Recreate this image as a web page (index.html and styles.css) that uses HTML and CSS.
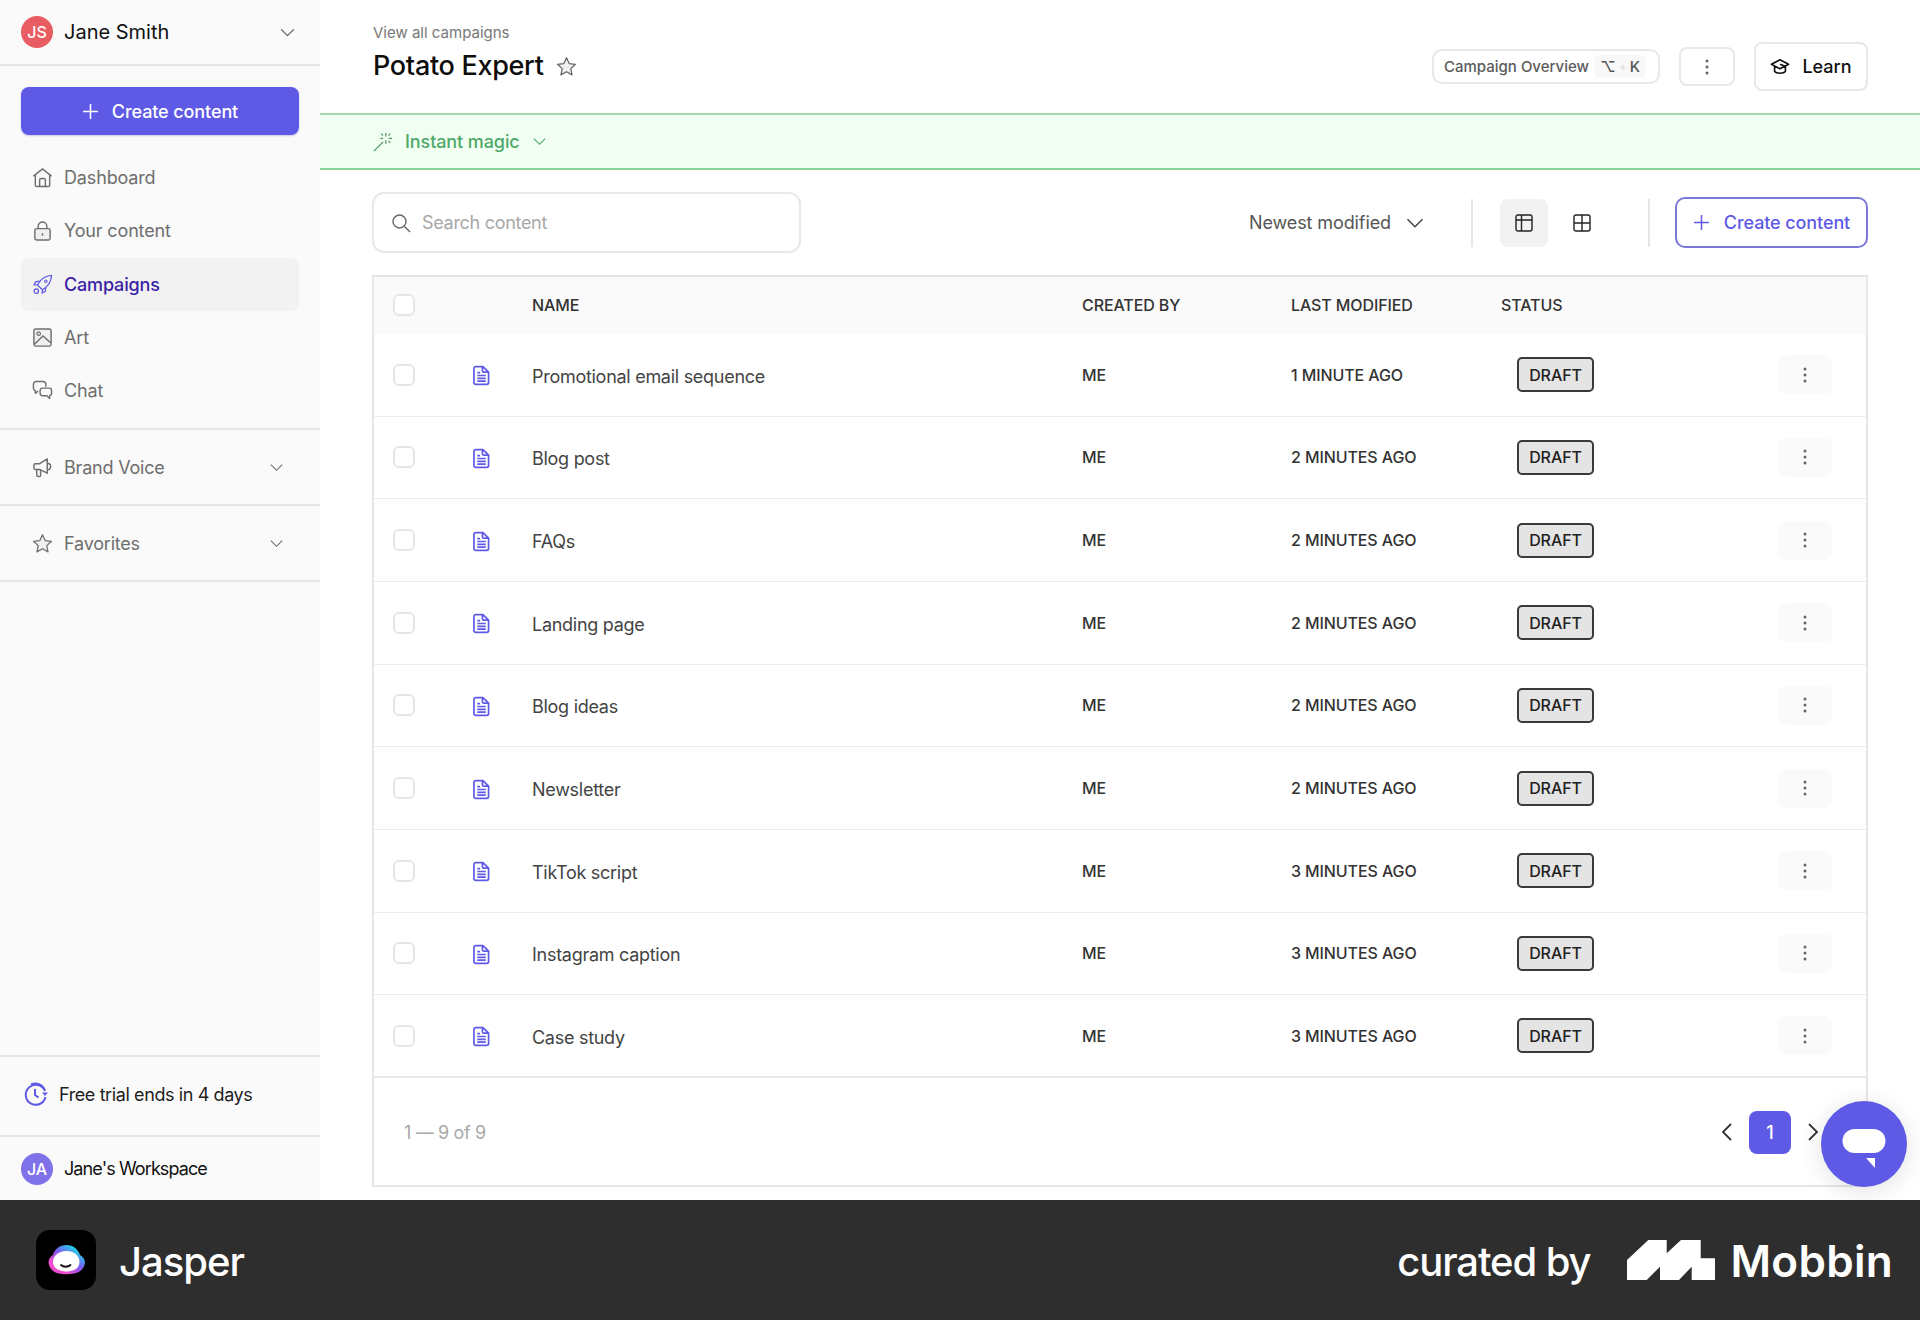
FILE: index.html
```html
<!DOCTYPE html>
<html lang="en">
<head>
<meta charset="utf-8">
<title>Potato Expert</title>
<link rel="stylesheet" href="styles.css">
</head>
<body>
<svg class="sprite" aria-hidden="true">
  <symbol id="chev" viewBox="0 0 16 16"><path d="M2 5l6 6 6-6" fill="none" stroke="currentColor" stroke-width="1.2"/></symbol>
  <symbol id="plus" viewBox="0 0 16 16"><path d="M8 1v14M1 8h14" fill="none" stroke="currentColor" stroke-width="1.4"/></symbol>
  <symbol id="home" viewBox="0 0 22 22"><path d="M1.5 9.5L11 2l9.5 7.5M3.5 8.5V19a1.500 1.500 0 0 0 1.500 1.500h12a1.500 1.500 0 0 0 1.500-1.500V8.500M8 20.500v-7a1.500 1.500 0 0 1 1.500-1.500h3a1.500 1.500 0 0 1 1.500 1.500v7" fill="none" stroke="currentColor" stroke-width="1.500"/></symbol>
  <symbol id="lock" viewBox="0 0 22 22"><rect x="3" y="9" width="16" height="12" rx="1.800" fill="#efefef" stroke="currentColor" stroke-width="1.500"/><path d="M6.500 9V6.500a4.500 4.500 0 0 1 9 0V9M11 14v2.500" fill="none" stroke="currentColor" stroke-width="1.500"/></symbol>
  <symbol id="rocket" viewBox="0 0 22 22"><path d="M20.500 1.500c-5 .5-9 2-12 6l-3 4 5.500 5 4-3c3.500-3 5-7 5.500-12zM8.500 7.500L4 8 2 11.500l3.500-.5M14.500 13.500l-.5 4.500-3.500 2 .5-3.500" fill="none" stroke="currentColor" stroke-width="1.300" stroke-linejoin="round"/><circle cx="4.500" cy="18" r="2.300" fill="none" stroke="currentColor" stroke-width="1.300"/><circle cx="14.500" cy="7.500" r="1.300" fill="none" stroke="currentColor" stroke-width="1.100"/></symbol>
  <symbol id="art" viewBox="0 0 22 22"><rect x="2" y="2" width="18" height="18" rx="1.800" fill="#f0f0f0" stroke="currentColor" stroke-width="1.500"/><circle cx="7" cy="7" r="1.800" fill="none" stroke="currentColor" stroke-width="1.300"/><path d="M2.500 18l9-8.500 8 7" fill="none" stroke="currentColor" stroke-width="1.500"/></symbol>
  <symbol id="chat" viewBox="0 0 22 22"><path d="M14.500 7V4.500a3 3 0 0 0-3-3h-7a3 3 0 0 0-3 3v4a3 3 0 0 0 2 2.800V14l3-2.500" fill="none" stroke="currentColor" stroke-width="1.500" stroke-linejoin="round"/><path d="M18 8.500h-7a2.500 2.500 0 0 0-2.500 2.500v3a2.500 2.500 0 0 0 2.500 2.500h4.500l3 3v-3.100a2.500 2.500 0 0 0 2-2.400v-3a2.500 2.500 0 0 0-2.500-2.500z" fill="#fafafa" stroke="currentColor" stroke-width="1.500" stroke-linejoin="round"/></symbol>
  <symbol id="mega" viewBox="0 0 22 22"><path d="M2 8.500c0-1 .7-1.500 1.500-1.500H8l8-5v15L8 13H3.500C2.700 13 2 12.500 2 11.500zM5 13v6a1.500 1.500 0 0 0 1.500 1.500H8a1 1 0 0 0 1-1V13M16 6.500a3.500 3.500 0 0 1 0 7" fill="none" stroke="currentColor" stroke-width="1.500" stroke-linejoin="round"/></symbol>
  <symbol id="star" viewBox="0 0 22 22"><path d="M11 1.800l2.800 6.100 6.600.8-4.900 4.500 1.300 6.600L11 16.500l-5.800 3.300 1.300-6.600L1.600 8.700l6.600-.8z" fill="#efefef" stroke="currentColor" stroke-width="1.300" stroke-linejoin="round"/></symbol>
  <symbol id="doc" viewBox="0 0 18 22"><path d="M3 1.500h7.500L16.500 7.500V18.500a2 2 0 0 1-2 2H3a2 2 0 0 1-2-2v-15a2 2 0 0 1 2-2zM10 1.500V6a1.500 1.500 0 0 0 1.500 1.500h5M4.500 11h9M4.500 14h9M4.500 17h9M4.500 8h3" fill="none" stroke="currentColor" stroke-width="1.800"/></symbol>
  <symbol id="dots" viewBox="0 0 4 16"><circle cx="2" cy="2" r="1.500" fill="currentColor"/><circle cx="2" cy="8" r="1.500" fill="currentColor"/><circle cx="2" cy="14" r="1.500" fill="currentColor"/></symbol>
</svg>

<div class="app">
  <div class="top">
    <aside class="sidebar">
      <div class="user">
        <span class="avatar avatar-red">JS</span>
        <span class="user-name">Jane Smith</span>
        <svg class="ic-chev user-chev"><use href="#chev"/></svg>
      </div>
      <div class="nav-block">
        <button class="btn-primary"><svg class="ic-plus"><use href="#plus"/></svg>Create content</button>
        <nav class="nav">
          <a class="nav-item"><svg class="ic"><use href="#home"/></svg>Dashboard</a>
          <a class="nav-item"><svg class="ic"><use href="#lock"/></svg>Your content</a>
          <a class="nav-item active"><svg class="ic"><use href="#rocket"/></svg>Campaigns</a>
          <a class="nav-item"><svg class="ic"><use href="#art"/></svg>Art</a>
          <a class="nav-item"><svg class="ic"><use href="#chat"/></svg>Chat</a>
        </nav>
      </div>
      <div class="section"><svg class="ic"><use href="#mega"/></svg>Brand Voice<svg class="ic-chev section-chev"><use href="#chev"/></svg></div>
      <div class="section"><svg class="ic"><use href="#star"/></svg>Favorites<svg class="ic-chev section-chev"><use href="#chev"/></svg></div>
      <div class="grow"></div>
      <div class="trial">
        <svg class="ic-trial" viewBox="0 0 26 24"><path d="M22 9A10 10 0 1 0 22.500 15M8 2.500A10 10 0 0 1 22 9" fill="none" stroke="currentColor" stroke-width="2"/><path d="M12 7v6l3.500 2.500" fill="none" stroke="currentColor" stroke-width="2"/><path d="M19 10.500h6l-3 3.500z" fill="currentColor"/></svg>
        Free trial ends in 4 days
      </div>
      <div class="workspace"><span class="avatar avatar-purple">JA</span><span class="ws-name">Jane's Workspace</span></div>
    </aside>

    <main class="main">
      <header class="page-head">
        <div class="titles">
          <div class="crumb">View all campaigns</div>
          <div class="title-row"><h1 class="title">Potato Expert</h1><svg class="ic-star"><use href="#star"/></svg></div>
        </div>
        <div class="head-actions">
          <div class="overview">Campaign Overview<span class="kbd"><span>⌥</span><span class="kbd-plus">+</span><span>K</span></span></div>
          <button class="btn-dots"><svg class="ic-dots"><use href="#dots"/></svg></button>
          <button class="btn-learn">
            <svg class="ic-cap" viewBox="0 0 22 20"><path d="M11 2L1.500 7 11 12l9.500-5zM5 9.500V15c2 2.500 10 2.500 12 0V9.500M11 7l5 2" fill="none" stroke="currentColor" stroke-width="1.800" stroke-linejoin="round"/></svg>
            Learn
          </button>
        </div>
      </header>

      <div class="magic">
        <svg class="ic-wand" viewBox="0 0 22 22"><path d="M1 21L11 11M14 1v4M14 9v4M21 7h-4M11 7H8M9 2l2 2M19 2l-2 2M19 12l-2-2" fill="none" stroke="currentColor" stroke-width="1.400"/></svg>
        <span>Instant magic</span>
        <svg class="ic-chev magic-chev"><use href="#chev"/></svg>
      </div>

      <div class="content">
        <div class="toolbar">
          <label class="search">
            <svg class="ic-search" viewBox="0 0 20 20"><circle cx="8.500" cy="8.500" r="6.500" fill="none" stroke="currentColor" stroke-width="1.400"/><path d="M13.500 13.500l5.500 5.500" stroke="currentColor" stroke-width="1.400"/></svg>
            <span>Search content</span>
          </label>
          <div class="sort">Newest modified<svg class="ic-sort"><use href="#chev"/></svg></div>
          <span class="vr vr-a"></span>
          <button class="view on"><svg class="ic-view" viewBox="0 0 18 18"><rect x="1" y="1" width="16" height="16" rx="2" fill="none" stroke="currentColor" stroke-width="1.400"/><path d="M1 6h16M6.500 1v16" stroke="currentColor" stroke-width="1.400"/></svg></button>
          <button class="view"><svg class="ic-view" viewBox="0 0 18 18"><rect x="1" y="1" width="16" height="16" rx="2" fill="none" stroke="currentColor" stroke-width="1.400"/><path d="M1 9h16M9 1v16" stroke="currentColor" stroke-width="1.400"/></svg></button>
          <span class="vr vr-b"></span>
          <button class="btn-outline"><svg class="ic-plus"><use href="#plus"/></svg>Create content</button>
        </div>

        <div class="table">
          <div class="row row-head">
            <span class="cell-chk"><span class="chk"></span></span><span></span>
            <span>NAME</span><span>CREATED BY</span><span>LAST MODIFIED</span><span>STATUS</span><span></span>
          </div>
          <div class="row"><span class="cell-chk"><span class="chk"></span></span><span class="cell-doc"><svg class="ic-doc"><use href="#doc"/></svg></span><span class="name">Promotional email sequence</span><span class="meta">ME</span><span class="meta">1 MINUTE AGO</span><span class="cell-status"><span class="draft">DRAFT</span></span><span class="act"><svg class="ic-dots"><use href="#dots"/></svg></span></div>
          <div class="row"><span class="cell-chk"><span class="chk"></span></span><span class="cell-doc"><svg class="ic-doc"><use href="#doc"/></svg></span><span class="name">Blog post</span><span class="meta">ME</span><span class="meta">2 MINUTES AGO</span><span class="cell-status"><span class="draft">DRAFT</span></span><span class="act"><svg class="ic-dots"><use href="#dots"/></svg></span></div>
          <div class="row"><span class="cell-chk"><span class="chk"></span></span><span class="cell-doc"><svg class="ic-doc"><use href="#doc"/></svg></span><span class="name">FAQs</span><span class="meta">ME</span><span class="meta">2 MINUTES AGO</span><span class="cell-status"><span class="draft">DRAFT</span></span><span class="act"><svg class="ic-dots"><use href="#dots"/></svg></span></div>
          <div class="row"><span class="cell-chk"><span class="chk"></span></span><span class="cell-doc"><svg class="ic-doc"><use href="#doc"/></svg></span><span class="name">Landing page</span><span class="meta">ME</span><span class="meta">2 MINUTES AGO</span><span class="cell-status"><span class="draft">DRAFT</span></span><span class="act"><svg class="ic-dots"><use href="#dots"/></svg></span></div>
          <div class="row"><span class="cell-chk"><span class="chk"></span></span><span class="cell-doc"><svg class="ic-doc"><use href="#doc"/></svg></span><span class="name">Blog ideas</span><span class="meta">ME</span><span class="meta">2 MINUTES AGO</span><span class="cell-status"><span class="draft">DRAFT</span></span><span class="act"><svg class="ic-dots"><use href="#dots"/></svg></span></div>
          <div class="row"><span class="cell-chk"><span class="chk"></span></span><span class="cell-doc"><svg class="ic-doc"><use href="#doc"/></svg></span><span class="name">Newsletter</span><span class="meta">ME</span><span class="meta">2 MINUTES AGO</span><span class="cell-status"><span class="draft">DRAFT</span></span><span class="act"><svg class="ic-dots"><use href="#dots"/></svg></span></div>
          <div class="row"><span class="cell-chk"><span class="chk"></span></span><span class="cell-doc"><svg class="ic-doc"><use href="#doc"/></svg></span><span class="name">TikTok script</span><span class="meta">ME</span><span class="meta">3 MINUTES AGO</span><span class="cell-status"><span class="draft">DRAFT</span></span><span class="act"><svg class="ic-dots"><use href="#dots"/></svg></span></div>
          <div class="row"><span class="cell-chk"><span class="chk"></span></span><span class="cell-doc"><svg class="ic-doc"><use href="#doc"/></svg></span><span class="name">Instagram caption</span><span class="meta">ME</span><span class="meta">3 MINUTES AGO</span><span class="cell-status"><span class="draft">DRAFT</span></span><span class="act"><svg class="ic-dots"><use href="#dots"/></svg></span></div>
          <div class="row row-last"><span class="cell-chk"><span class="chk"></span></span><span class="cell-doc"><svg class="ic-doc"><use href="#doc"/></svg></span><span class="name">Case study</span><span class="meta">ME</span><span class="meta">3 MINUTES AGO</span><span class="cell-status"><span class="draft">DRAFT</span></span><span class="act"><svg class="ic-dots"><use href="#dots"/></svg></span></div>
          <div class="table-foot">
            <span class="count">1 — 9 of 9</span>
            <div class="pager">
              <svg class="ic-page" viewBox="0 0 12 20"><path d="M10 2L2 10l8 8" fill="none" stroke="currentColor" stroke-width="1.800"/></svg>
              <span class="page-num">1</span>
              <svg class="ic-page" viewBox="0 0 12 20"><path d="M2 2l8 8-8 8" fill="none" stroke="currentColor" stroke-width="1.800"/></svg>
            </div>
          </div>
        </div>
      </div>
    </main>
  </div>

  <footer class="credit">
    <div class="credit-left">
      <span class="app-icon">
        <svg viewBox="0 0 60 60" width="60" height="60">
          <defs><linearGradient id="jg" x1="0.100" y1="0.900" x2="0.850" y2="0.050"><stop offset="0.200" stop-color="#f04bd0"/><stop offset="0.550" stop-color="#7a5cf2"/><stop offset="0.900" stop-color="#22d3e6"/></linearGradient></defs>
          <path d="M12.500 33C12.500 29 14.500 26.500 17 25 18.500 19 24 15 30.500 15 37 15 42 19 44 25 47 26.500 49 29.500 49 33 48 39 44 42.500 38 43.500 33 44.500 27 44.500 23 43.500 17 42.500 13.500 38.500 12.500 33Z" fill="url(#jg)"/>
          <path d="M17 32C17 25.500 23 21 30.500 21 38 21 43.500 25.500 43.500 32 43.500 38 38 41.500 30.500 41.500 23 41.500 17 38 17 32Z" fill="#fff"/>
          <path d="M25 35c2.500 2.300 7 2.300 9.500 0" fill="none" stroke="#111" stroke-width="1.800" stroke-linecap="round"/>
        </svg>
      </span>
      <span class="brand">Jasper</span>
    </div>
    <div class="credit-right">
      <span class="curated">curated by</span>
      <svg class="mobbin-logo" viewBox="0 0 88 40"><path d="M0 20L21.300 0H39.700V13.300L54 0H73.700V18.300H88V40H64.700V26.700L52 40H33V26.700L19.700 40H0Z" fill="#fff"/></svg>
      <span class="mobbin">Mobbin</span>
    </div>
  </footer>

  <div class="chat-bubble">
    <svg viewBox="0 0 44 40" width="44" height="40"><rect x="0.500" y="0" width="43" height="24" rx="12" fill="#fff"/><path d="M24 29h9v10z" fill="#fff"/></svg>
  </div>
</div>
</body>
</html>
```

FILE: styles.css
```css
* { box-sizing: border-box; }
html, body { margin: 0; padding: 0; }
body { font-family: Inter, "Liberation Sans", sans-serif; color: #111; background: #fff; }
button { font: inherit; background: none; border: 0; padding: 0; }
.sprite { display: none; }

.app { position: relative; width: 1920px; height: 1320px; display: flex; flex-direction: column; overflow: hidden; }
.top { display: flex; height: 1200px; }

/* Sidebar */
.sidebar { width: 320px; flex: none; background: #fafafa; display: flex; flex-direction: column; font-size: 18px; color: #6e6e6e; }
.user { height: 66px; flex: none; display: flex; align-items: center; padding: 0 21px; border-bottom: 2px solid #e6e6e6; color: #111; }
.avatar { width: 32px; height: 32px; flex: none; border-radius: 50%; color: #fff; font-size: 16px; font-weight: 500; display: flex; align-items: center; justify-content: center; }
.avatar-red { background: #e85d62; }
.avatar-purple { background: #7f72e8; }
.user-name { margin-left: 11px; font-size: 20px; }
.ic-chev { width: 16px; height: 16px; display: block; }
.user-chev { margin-left: auto; margin-right: 3px; width: 17px; height: 17px; color: #6e6e6e; }
.nav-block { height: 364px; flex: none; padding: 21px 21px 0; border-bottom: 2px solid #e6e6e6; }
.btn-primary { width: 278px; height: 48px; border-radius: 8px; background: #5f5ae6; color: #fff; font-weight: 500; font-size: 18px; letter-spacing: -0.1px; display: flex; align-items: center; justify-content: center; gap: 13px; box-shadow: 0 1px 2px rgba(60,50,200,.25); }
.ic-plus { width: 17px; height: 17px; display: block; }
.nav { margin-top: 16px; }
.nav-item { height: 53.3px; display: flex; align-items: center; gap: 11px; padding-left: 11px; border-radius: 8px; letter-spacing: -0.15px; }
.nav-item.active { background: #f2f2f2; color: #3a1fa6; font-weight: 500; }
.nav-item.active .ic { color: #5f5ae6; }
.ic { width: 21px; height: 21px; flex: none; display: block; }
.section { height: 76px; flex: none; display: flex; align-items: center; gap: 11px; padding: 0 36px 0 32px; border-bottom: 2px solid #e6e6e6; letter-spacing: -0.2px; }
.section-chev { margin-left: auto; margin-right: 0; color: #6e6e6e; width: 15px; height: 15px; }
.grow { flex: 1; }
.trial { height: 82px; flex: none; display: flex; align-items: center; gap: 10px; padding: 0 0 4px 23px; border-top: 2px solid #e6e6e6; border-bottom: 2px solid #e6e6e6; color: #1e1e1e; letter-spacing: -0.4px; }
.ic-trial { width: 26px; height: 24px; flex: none; color: #5f5ae6; }
.workspace { height: 63px; flex: none; display: flex; align-items: center; padding-left: 21px; gap: 11px; color: #111; }
.ws-name { letter-spacing: -0.9px; }

/* Main */
.main { flex: 1; min-width: 0; display: flex; flex-direction: column; }
.page-head { height: 113px; flex: none; padding: 24px 52px 0 53px; display: flex; justify-content: space-between; align-items: flex-start; }
.crumb { font-size: 15px; line-height: 18px; color: #777; }
.title-row { display: flex; align-items: center; gap: 12px; margin-top: 6px; }
.title { margin: 0; font-size: 27px; line-height: 36px; font-weight: 500; letter-spacing: -0.3px; color: #0d0d0d; }
.ic-star { width: 21px; height: 21px; color: #666; display: block; }
.head-actions { display: flex; align-items: center; gap: 19px; margin-top: 18px; }
.overview { width: 228px; height: 35px; border: 2px solid #e8e8e8; border-radius: 10px; padding: 0 12px 0 10px; display: flex; align-items: center; justify-content: space-between; font-size: 15px; color: #5b5b5b; font-weight: 500; background: #fff; white-space: nowrap; }
.kbd { background: #f8f8f8; border-radius: 5px; padding: 2px 6px; display: flex; align-items: center; gap: 3px; font-size: 15px; color: #555; }
.kbd-plus { color: #ddd; font-size: 12px; }
.btn-dots { width: 56px; height: 39px; border: 2px solid #e8e8e8; border-radius: 8px; display: flex; align-items: center; justify-content: center; color: #666; }
.ic-dots { width: 4px; height: 16px; display: block; }
.btn-learn { width: 114px; height: 49px; border: 2px solid #e8e8e8; border-radius: 8px; display: flex; align-items: center; justify-content: center; gap: 12px; font-size: 18px; font-weight: 500; color: #111; }
.ic-cap { width: 20px; height: 18px; }

.magic { height: 57px; flex: none; background: #f1fff3; border-top: 2px solid #a3d9ad; border-bottom: 2px solid #8ad49a; padding-left: 53px; display: flex; align-items: center; font-size: 18px; font-weight: 500; letter-spacing: -0.1px; color: #4fa868; }
.ic-wand { width: 20px; height: 20px; margin-right: 12px; color: #5a9a6a; }
.magic-chev { margin-left: 12px; width: 15px; height: 15px; }

.content { flex: 1; padding: 0 52px 0 52px; }
.toolbar { display: flex; align-items: center; height: 105px; }
.search { width: 429px; height: 61px; border: 2px solid #e8e8e8; border-radius: 12px; display: flex; align-items: center; padding-left: 17px; gap: 11px; font-size: 18px; color: #a8a8a8; letter-spacing: -0.3px; }
.ic-search { width: 20px; height: 20px; color: #666; }
.sort { margin-left: auto; display: flex; align-items: center; gap: 14px; font-size: 18px; letter-spacing: -0.1px; color: #555; }
.ic-sort { width: 20px; height: 20px; color: #444; display: block; }
.vr { width: 2px; height: 48px; background: #e6e6e6; }
.vr-a { margin-left: 46px; }
.vr-b { margin-left: 42px; }
.view { width: 48px; height: 48px; border-radius: 8px; display: flex; align-items: center; justify-content: center; color: #222; }
.view.on { background: #f2f2f2; margin-left: 27px; margin-right: 10px; }
.ic-view { width: 18px; height: 18px; }
.btn-outline { width: 193px; height: 51px; margin-left: 25px; border: 2px solid #7d78d6; border-radius: 10px; color: #5f5ae6; font-size: 18px; font-weight: 500; letter-spacing: -0.1px; display: flex; align-items: center; justify-content: center; gap: 14px; }

.table { border: 2px solid #e6e6e6; height: 912px; }
.row { display: grid; grid-template-columns: 75px 83px 550px 209px 210px 277px 54px 34px; align-items: center; height: 82.67px; border-bottom: 1px solid #ececec; font-size: 16px; letter-spacing: -0.1px; }
.row-head { height: 57px; background: #fafafa; border-bottom: 0; font-weight: 500; color: #333; padding-bottom: 2px; }
.row-last { border-bottom: 2px solid #e8e8e8; }
.cell-chk { padding-left: 19px; display: flex; }
.chk { width: 22px; height: 22px; border: 2px solid #e6e6e6; border-radius: 6px; background: #fff; display: block; }
.cell-doc { padding-left: 24px; padding-top: 2px; display: flex; color: #5f5ae6; }
.ic-doc { width: 17px; height: 21px; display: block; }
.name { font-size: 18px; letter-spacing: -0.28px; color: #444; padding-top: 3px; }
.meta { font-weight: 500; color: #333; }
.cell-status { padding-left: 16px; display: flex; }
.draft { width: 77px; height: 35px; border: 2px solid #3a3a3a; border-radius: 5px; background: #e4e4e4; display: flex; align-items: center; justify-content: center; font-weight: 500; color: #222; }
.act { width: 54px; height: 39px; border-radius: 8px; background: #fafafa; display: flex; align-items: center; justify-content: center; color: #666; }
.table-foot { height: 106px; display: flex; align-items: center; justify-content: space-between; padding: 3px 47px 0 30px; }
.count { font-size: 18px; letter-spacing: -0.35px; color: #a8a8a8; }
.pager { display: flex; align-items: center; gap: 16px; color: #333; }
.ic-page { width: 12px; height: 20px; display: block; }
.page-num { width: 42px; height: 43px; border-radius: 8px; background: #5f5ae6; color: #fff; font-size: 18px; font-weight: 500; display: flex; align-items: center; justify-content: center; }

/* Footer band */
.credit { height: 120px; flex: none; background: #2e2e2e; display: flex; align-items: center; justify-content: space-between; padding: 0 27px 0 36px; color: #fff; }
.credit-left, .credit-right { display: flex; align-items: center; }
.app-icon { width: 60px; height: 60px; border-radius: 14px; background: #000; display: block; overflow: hidden; }
.app-icon svg { display: block; }
.brand { margin-left: 23px; padding-top: 2px; font-size: 40px; font-weight: 500; letter-spacing: -1px; }
.curated { padding-top: 2px; font-size: 40px; font-weight: 500; letter-spacing: -1.1px; }
.mobbin-logo { width: 88px; height: 40px; margin-left: 37px; display: block; }
.mobbin { margin-left: 15px; padding-top: 2px; font-size: 44px; font-weight: 600; letter-spacing: 0.3px; }

.chat-bubble { position: absolute; left: 1821px; top: 1101px; width: 86px; height: 86px; border-radius: 50%; background: #5f5ae6; box-shadow: 0 4px 24px rgba(0,0,0,.12); display: flex; align-items: center; justify-content: center; padding-top: 10px; }
```
